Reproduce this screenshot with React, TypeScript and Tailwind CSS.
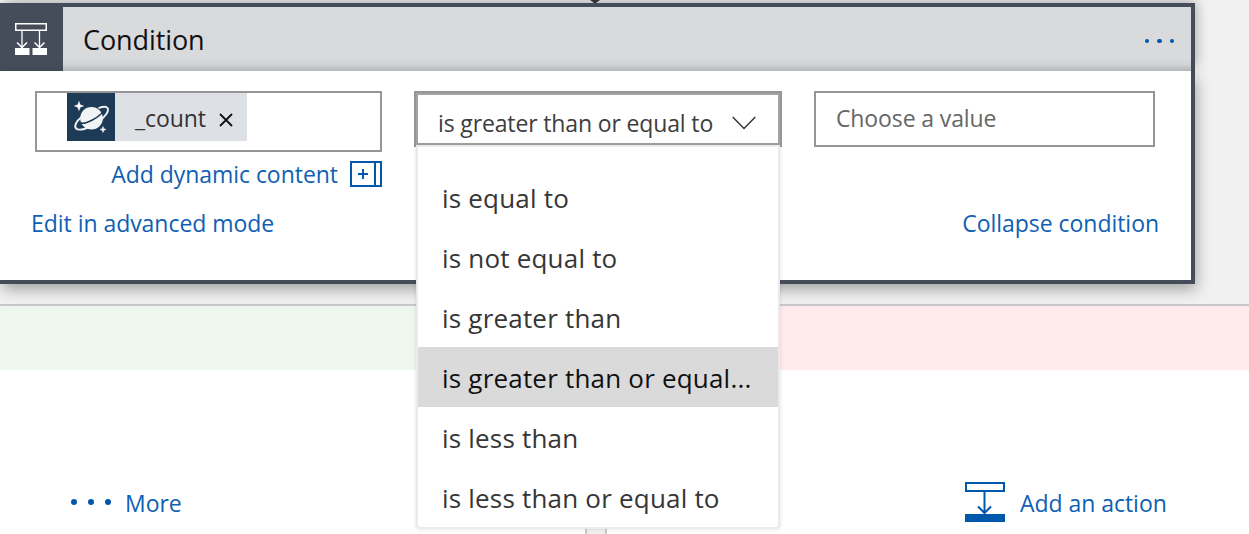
import type { ReactNode } from "react";

const options = [
  { label: "is equal to" },
  { label: "is not equal to" },
  { label: "is greater than" },
  { label: "is greater than or equal...", selected: true },
  { label: "is less than" },
  { label: "is less than or equal to" },
];

function ConditionIcon() {
  return (
    <svg width="34" height="34" viewBox="0 0 34 34" fill="none" stroke="white">
      <rect x="1.75" y="1.75" width="30.5" height="6.5" strokeWidth="1.5" />
      <path d="M8 9v17M25.500 9v17" strokeWidth="1.300" />
      <path d="M3 20.500l5 5 5-5M20.500 20.500l5 5 5-5" strokeWidth="1.500" />
      <path d="M1 26h14.500v7H1zM18.500 26H33v7H18.500z" fill="white" stroke="none" />
    </svg>
  );
}

function PlanetIcon() {
  return (
    <svg width="48" height="48" viewBox="0 0 48 48" fill="none">
      <circle cx="24.500" cy="25.300" r="11.300" fill="#f2f3f5" />
      <path d="M13 29.500c4 3 20-5 23.500-12" stroke="#1d3a57" strokeWidth="1.600" />
      <path
        d="M14 24.500C9 28.500 7 33 9 35.500c3 3 14-.5 21-5.500 8-5.500 12.500-12 10.500-15-1.200-1.800-5-1.300-9 .2"
        stroke="#f2f3f5"
        strokeWidth="1.900"
      />
      <path d="M12 8.500l1.200 3.300 3.300 1.200-3.300 1.200L12 17.500l-1.200-3.300L7.500 13l3.300-1.200zM36 33.500l.8 2.200 2.200.8-2.200.8-.8 2.200-.8-2.200-2.200-.8 2.200-.8z" fill="white" stroke="white" strokeWidth=".5" />
    </svg>
  );
}

function Dots({ gap, size }: { gap: string; size: string }) {
  return (
    <span className={`flex ${gap}`}>
      {[0, 1, 2].map((i) => (
        <span key={i} className={`${size} rounded-full bg-[#0058ad]`} />
      ))}
    </span>
  );
}

function Link({ children }: { children: ReactNode }) {
  return (
    <a className="-mt-px whitespace-nowrap text-[23px] leading-8 tracking-[-0.04px] text-[#0f60b3]">{children}</a>
  );
}

function OperatorSelect() {
  return (
    <div className="relative h-14 w-[368px] border-2 border-[#969696]">
      <div className="flex h-[52px] items-center border-2 border-[#a3a3a3] pl-5">
        <span className="w-[294px] whitespace-nowrap pt-[7px] text-[23px] leading-8 tracking-[-0.14px] text-[#3d3d3d]">
          is greater than or equal to
        </span>
        <svg className="mt-2" width="24" height="14" viewBox="0 0 24 14" fill="none" stroke="#333" strokeWidth="1.400">
          <path d="M.7 1L12 12.500 23.300 1" />
        </svg>
      </div>
      <ul className="absolute top-[52px] left-0 z-10 h-96 w-[364px] rounded-b-sm border-2 border-[#eaeaea] bg-white pt-5 shadow-[0_0_4px_rgba(0,0,0,0.12)]">
        {options.map(({ label, selected }) => (
          <li
            key={label}
            className={`flex h-[60px] items-center whitespace-nowrap pl-6 pt-[3px] text-[26px] tracking-[0.2px] ${
              selected ? "bg-[#dadada] text-[#111]" : "text-[#363636]"
            }`}
          >
            {label}
          </li>
        ))}
      </ul>
    </div>
  );
}

export default function App() {
  return (
    <main className="flex h-[534px] w-[1249px] flex-col overflow-hidden bg-white font-['Open_Sans','Noto_Sans',sans-serif]">
      <div className="relative z-10 h-[304px] bg-[#f1f1f1] pt-[3px]">
        <svg className="absolute top-0 left-[589px] z-10" width="12" height="3" viewBox="0 0 12 3">
          <path d="M1 0h10L7 3H5z" fill="#333" />
        </svg>
        <section className="w-[1195px]">
          <header className="flex h-[68px] bg-[#454d5a] shadow-[3px_-3px_12px_-2px_rgba(0,0,0,0.32)]">
            <div className="flex w-[63px] items-center pl-[14px] pt-[4px]">
              <ConditionIcon />
            </div>
            <div className="mt-1 mr-1 flex flex-1 items-center justify-between bg-[linear-gradient(#d9dadc_80%,#d3d4d6_90%,#bfc0c2)] pl-5 pr-[17px]">
              <h1 className="pt-0.5 text-[27px] leading-9 tracking-[-0.1px] text-[#111]">Condition</h1>
              <div className="pt-1">
                <Dots gap="gap-2" size="size-[4.4px]" />
              </div>
            </div>
          </header>
          <div className="relative h-[213px] border-r-4 border-b-4 border-[#454d5a] bg-white pt-5 pl-[35px] shadow-[2px_6px_14px_-1px_rgba(0,0,0,0.34)]">
            <div className="flex h-[61px] items-start gap-8">
              <div className="flex h-[61px] w-[347px] border-2 border-[#969696] pl-[30px]">
                <div className="flex h-12 w-[180px] items-center bg-[#dde1e6]">
                  <div className="size-12 bg-[#1d3a57]">
                    <PlanetIcon />
                  </div>
                  <span className="w-[104px] pl-5 pt-px text-[23px] leading-8 tracking-[-0.1px] text-[#333]">_count</span>
                  <svg className="mt-1.5" width="14" height="14" viewBox="0 0 14 14" stroke="#111" strokeWidth="1.800">
                    <path d="M1 1l12 12M13 1L1 13" />
                  </svg>
                </div>
              </div>
              <OperatorSelect />
              <div className="h-14 w-[341px] border-2 border-[#969696] pl-5 pt-[9px] text-[23px] leading-8 tracking-[-0.12px] text-[#666]">
                Choose a value
              </div>
            </div>
            <div className="flex w-[347px] items-center justify-end gap-3 pt-[5px]">
              <span className="flex pt-0.5">
                <Link>Add dynamic content</Link>
              </span>
              <svg width="32" height="26" viewBox="0 0 32 26" fill="none" stroke="#0058ad" strokeWidth="2">
                <path d="M1 1h30v24H1zM25 1v24M8 13h10M13 8v10" />
              </svg>
            </div>
            <div className="-ml-1 flex w-[1128px] justify-between pt-[18px]">
              <Link>Edit in advanced mode</Link>
              <Link>Collapse condition</Link>
            </div>
          </div>
        </section>
      </div>
      <div className="flex h-[66px] border-t-2 border-[#c8c8c8]">
        <div className="w-[596px] bg-[#edf7ee]" />
        <div className="flex-1 bg-[#ffebeb]" />
      </div>
      <div className="flex h-[164px] items-start">
        <div className="flex w-[585px] items-center gap-[14px] pl-[71px] pt-[118px]">
          <span className="-mt-[3px]">
            <Dots gap="gap-[11px]" size="size-1.5" />
          </span>
          <Link>More</Link>
        </div>
        <div className="h-full w-[22px] border-x-2 border-[#c8c8c8] bg-[#f0f0f0] [clip-path:inset(157px_0_0_0)]" />
        <div className="flex flex-1 items-center gap-[15px] pt-[112px] pl-[358px]">
          <svg width="40" height="40" viewBox="0 0 40 40" fill="none" stroke="#0058ad" strokeWidth="2">
            <path d="M1 1h38v8H1zM19.500 10v21M13 24.500l6.500 6.500 6.500-6.500" />
            <path d="M0 32h40v8H0z" fill="#0058ad" stroke="none" />
          </svg>
          <div className="flex pt-0.5">
            <Link>Add an action</Link>
          </div>
        </div>
      </div>
    </main>
  );
}
